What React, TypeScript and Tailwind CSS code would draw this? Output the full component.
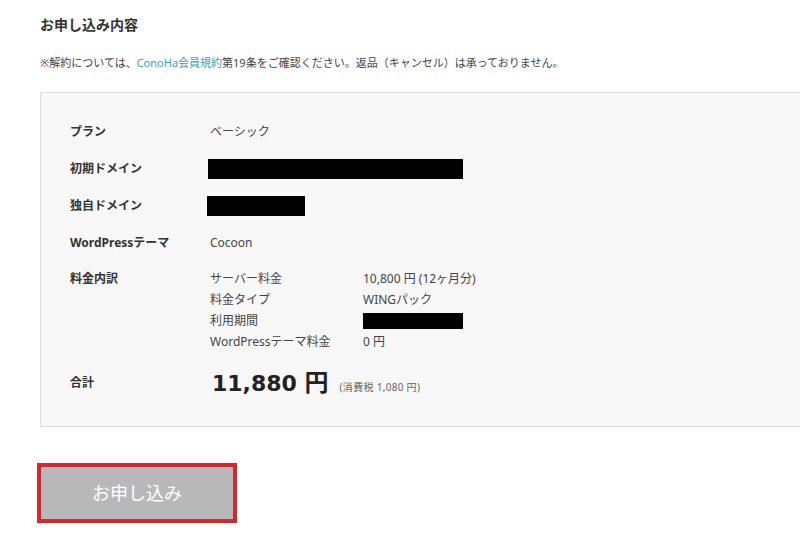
import React from "react";

const jp = { fontFamily: '"Noto Sans", "Noto Sans CJK JP", sans-serif' };

function Row({ label, children }: { label: string; children: React.ReactNode }) {
  return (
    <div className="flex h-[37px] items-center">
      <div className="w-[140px] shrink-0 text-[12px] font-bold text-[#333]">{label}</div>
      <div className="flex-1 text-[12px] text-[#444]">{children}</div>
    </div>
  );
}

export default function App() {
  const sub: [string, React.ReactNode][] = [
    ["サーバー料金", "10,800\u00a0円 (12ヶ月分)"],
    ["料金タイプ", "WINGパック"],
    ["利用期間", <div className="h-[16px] w-[100px] bg-black" />],
    ["WordPressテーマ料金", "0\u00a0円"],
  ];
  return (
    <div className="h-[537px] w-[800px] overflow-hidden bg-white text-[#333]" style={jp}>
      <div className="pl-[40px] pt-[15px]">
        <h2 className="h-[20px] text-[14px] font-bold leading-[20px] text-[#333]">お申し込み内容</h2>
        <p className="mt-[18px] h-[20px] text-[11px] leading-[20px] text-[#444]">
          ※解約については、<span className="text-[#3a9fc1]">ConoHa会員規約</span>第19条をご確認ください。返品（キャンセル）は承っておりません。
        </p>
        <div className="mt-[19px] w-[780px] border border-[#dcdcdc] bg-[#f8f8f8] pb-[25px] pl-[29px] pt-[20px]">
          <Row label="プラン">ベーシック</Row>
          <Row label="初期ドメイン">
            <div className="ml-[-2px] h-[20px] w-[255px] bg-black" />
          </Row>
          <Row label="独自ドメイン">
            <div className="ml-[-3px] h-[20px] w-[98px] bg-black" />
          </Row>
          <Row label="WordPressテーマ">Cocoon</Row>
          <div className="flex pt-[7px]">
            <div className="w-[140px] shrink-0 text-[12px] font-bold leading-[21px] text-[#333]">料金内訳</div>
            <div className="flex flex-col">
              {sub.map(([k, v], i) => (
                <div key={i} className="flex h-[21px] items-center text-[12px] leading-[21px] text-[#444]">
                  <div className="w-[153px] shrink-0">{k}</div>
                  <div>{v}</div>
                </div>
              ))}
            </div>
          </div>
          <div className="mt-[12px] flex h-[37px] items-center">
            <div className="w-[140px] shrink-0 text-[12px] font-bold text-[#333]">合計</div>
            <div className="flex items-baseline">
              <span
                className="ml-[2px] text-[22px] font-bold leading-[26px] text-[#222]"
                style={{ fontFamily: '"DejaVu Sans", "Noto Sans CJK JP", sans-serif' }}
              >
                11,880 <span style={jp} className="text-[24px]">円</span>
              </span>
              <span className="ml-[11px] text-[10px] tracking-[0.3px] text-[#666]">(消費税 1,080 円)</span>
            </div>
          </div>
        </div>
        <button
          className="ml-[-3px] mt-[36px] flex h-[60px] w-[200px] items-center justify-center border-[4px] border-[#d7262d] bg-[#b8b8b8] text-[18px] text-white"
          style={jp}
        >
          お申し込み
        </button>
      </div>
    </div>
  );
}
